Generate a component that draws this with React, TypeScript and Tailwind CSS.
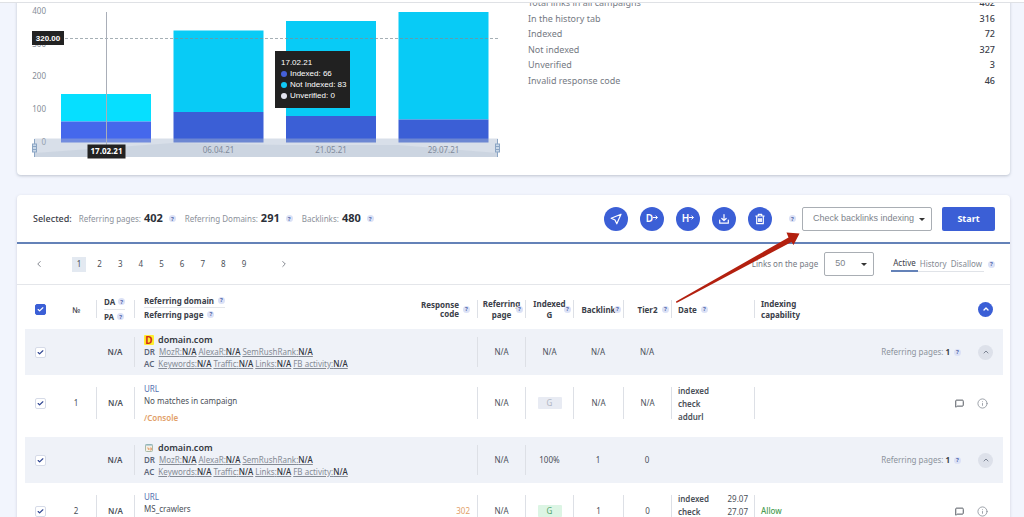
import { Check, ChevronLeft, ChevronRight, ChevronUp, Info, MessageSquare } from "lucide-react";
import type { ReactNode } from "react";

const stats: [string, number][] = [
  ["Total links in all campaigns", 402],
  ["In the history tab", 316],
  ["Indexed", 72],
  ["Not indexed", 327],
  ["Unverified", 3],
  ["Invalid response code", 46],
];

const bars = [
  { x: 61, top: 94, split: 121.5, hi: "#06dfff", lo: "#4568ec" },
  { x: 173.5, top: 30.5, split: 112, hi: "#08cbf6", lo: "#3b5fd6" },
  { x: 286, top: 21, split: 116, hi: "#08cbf6", lo: "#3b5fd6" },
  { x: 398.5, top: 12, split: 119.5, hi: "#08cbf6", lo: "#3b5fd6" },
];

function Hint() {
  return (
    <span className="inline-flex size-[7px] shrink-0 items-center justify-center rounded-full bg-[#dbe1f6] text-[6px] leading-none font-bold text-[#5468a8]">
      ?
    </span>
  );
}

function SliderHandle({ x }: { x: number }) {
  return (
    <g stroke="#8ba5c4" fill="#c9d8e8">
      <path d={`M${x} 139V157`} />
      <rect x={x - 2} y="144" width="4" height="8" />
      <path d={`M${x - 2} 146.5h4M${x - 2} 149.5h4`} />
    </g>
  );
}

function Chart() {
  return (
    <div className="relative w-[485px] shrink-0">
      <svg viewBox="17 -4 485 179" width="485" height="179" className="block">
        <g fill="#858d97" fontSize="8" textAnchor="end">
          <text x="46" y="14">400</text>
          <text x="46" y="47">300</text>
          <text x="46" y="79">200</text>
          <text x="46" y="112">100</text>
          <text x="46" y="145">0</text>
        </g>
        {bars.map((b) => (
          <g key={b.x}>
            <rect x={b.x} y={b.top} width="90" height={b.split - b.top} fill={b.hi} />
            <rect x={b.x} y={b.split} width="90" height={142.5 - b.split} fill={b.lo} />
          </g>
        ))}
        <path d="M35 38.5H500" stroke="#7f8d96" strokeOpacity=".7" strokeDasharray="3 2" />
        <path d="M106.5 12V145" stroke="#a9aeb8" />
        <rect x="34.5" y="138.5" width="463.5" height="18.5" fill="#a9b9cf" fillOpacity=".45" />
        <path d="M34.5 157V153L173 143L286 145L398 145L498 153V157Z" fill="#9fb0c2" fillOpacity=".2" />
        <SliderHandle x={34.5} />
        <SliderHandle x={497.5} />
        <g fill="#7f8a9b" fontSize="8" textAnchor="middle">
          <text x="218.500" y="153">06.04.21</text>
          <text x="331" y="153">21.05.21</text>
          <text x="443.500" y="153">29.07.21</text>
        </g>
        <rect x="32" y="31" width="32" height="14" fill="#222" />
        <rect x="87.500" y="144.500" width="38" height="14" fill="#222" />
        <g fill="#fff" fontWeight="700" fontSize="8" textAnchor="middle">
          <text x="48" y="41" className="font-['Liberation_Sans',sans-serif]">320.00</text>
          <text x="106.500" y="154">17.02.21</text>
        </g>
      </svg>
      <div className="absolute top-[55px] left-[258px] h-[57px] w-[75px] bg-[#212121] px-[6px] py-[6px] font-['Liberation_Sans',sans-serif] text-[8px] leading-[11px] text-white">
        <div>17.02.21</div>
        {[
          ["Indexed: 66", "bg-[#4560d8]"],
          ["Not Indexed: 83", "bg-[#10c8f5]"],
          ["Unverified: 0", "bg-[#e4e4ee]"],
        ].map(([label, color]) => (
          <div key={label} className="flex items-center gap-[3px] whitespace-nowrap">
            <span className={`size-[6px] shrink-0 rounded-full ${color}`} />
            {label}
          </div>
        ))}
      </div>
    </div>
  );
}

function Total({ label, value }: { label: string; value: number }) {
  return (
    <span className="mr-[9px] flex items-center text-[#8c919a]">
      {label}
      <b className="mr-[6px] ml-[3px] text-[11px] text-[#2b2f38]">{value}</b>
      <Hint />
    </span>
  );
}

function RoundButton({ label, children }: { label: string; children: ReactNode }) {
  return (
    <button aria-label={label} className="flex size-6 items-center justify-center rounded-full bg-[#3b5fd6] text-[10px] font-semibold text-white">
      {children}
    </button>
  );
}

function Glyph({ d }: { d: string }) {
  return (
    <svg viewBox="0 0 12 12" className="size-3" fill="none" stroke="currentColor" strokeWidth="1.2" strokeLinecap="round" strokeLinejoin="round">
      <path d={d} />
    </svg>
  );
}

function SmallArrow() {
  return (
    <svg viewBox="0 0 5 5" className="mb-[3px] size-[5px]" fill="none" stroke="currentColor">
      <path d="M0 2.500H4.300M2.500 .6L4.400 2.500L2.500 4.400" />
    </svg>
  );
}

function Dropdown({ label, value, className }: { label: string; value: string; className: string }) {
  return (
    <span className={`relative flex h-6 ${className}`}>
      <select aria-label={label} className="w-full appearance-none rounded-[2px] border border-[#a9aeb4] bg-white pl-[10px] font-['Liberation_Sans',sans-serif] text-[9px] text-[#7d838b]">
        <option>{value}</option>
      </select>
      <svg viewBox="0 0 6 3" className="pointer-events-none absolute top-[11px] right-[7px] h-[3px] w-[6px]">
        <path d="M0 0h6L3 3z" fill="#333" />
      </svg>
    </span>
  );
}

function Tick({ label, all }: { label: string; all?: boolean }) {
  return (
    <span className="relative mx-auto flex size-[11px]">
      <input
        type="checkbox"
        defaultChecked
        aria-label={label}
        className={`size-[11px] appearance-none rounded-[2px] border ${all ? "border-[#3b5fd6] bg-[#3b5fd6]" : "border-[#d6dbe8] bg-white"}`}
      />
      <Check strokeWidth={4} className={`pointer-events-none absolute top-[2px] left-[2px] size-[7px] ${all ? "text-white" : "text-[#2f4591]"}`} />
    </span>
  );
}

/* Cell whose separator is shorter than the row. */
function Cell({ children, height, className = "" }: { children?: ReactNode; height: string; className?: string }) {
  return <div className={`relative flex items-center border-l border-[#dde0e6] ${height} ${className}`}>{children}</div>;
}

function HeadCell({ children }: { children: ReactNode }) {
  return (
    <th className="p-0 pt-1">
      <Cell height="h-[18px]" className="justify-center text-center">
        <span>{children}</span>
        <span className="absolute right-[2px] flex">
          <Hint />
        </span>
      </Cell>
    </th>
  );
}

function Metric({ name }: { name: string }) {
  return (
    <a href="#" className="mr-[2px] text-[#858b95] underline">
      {name}:<span className="font-medium text-[#2f343c]">N/A</span>
    </a>
  );
}

function GroupRow({ icon, indexed, backlinks, tier2 }: { icon: ReactNode; indexed: string; backlinks: string; tier2: string }) {
  return (
    <tr className="h-[46px] bg-[#eff2f8]">
      <td className="p-0"><Tick label="Select domain" /></td>
      <td className="p-0" />
      <td className="p-0 text-center font-semibold">N/A</td>
      <td className="p-0" colSpan={2}>
        <Cell height="h-[30px]" className="pl-[9px]">
          <div className="leading-3 whitespace-nowrap">
            <div className="flex items-center gap-[4px] text-[9px] font-semibold text-[#343942]">
              {icon}
              domain.com
            </div>
            <div><b className="mr-[4px] font-semibold text-[#5d6678]">DR</b><Metric name="MozR" /><Metric name="AlexaR" /><Metric name="SemRushRank" /></div>
            <div><b className="mr-[4px] font-semibold text-[#5d6678]">AC</b><Metric name="Keywords" /><Metric name="Traffic" /><Metric name="Links" /><Metric name="FB activity" /></div>
          </div>
        </Cell>
      </td>
      <td className="p-0"><Cell height="h-[30px]" className="justify-center">N/A</Cell></td>
      <td className="p-0"><Cell height="h-[30px]" className="justify-center">{indexed}</Cell></td>
      <td className="p-0 text-center">{backlinks}</td>
      <td className="p-0 text-center">{tier2}</td>
      <td className="p-0" />
      <td className="p-0">
        <div className="flex items-center justify-end pr-[10px] text-[#8c929c]">
          Referring pages:<b className="mr-[4px] ml-[2px] text-[#3a3f48]">1</b>
          <Hint />
          <button aria-label="Collapse" className="ml-[17px] flex size-[15px] items-center justify-center rounded-full bg-[#dde1ea] text-[#7d8594]">
            <ChevronUp className="size-[8px]" strokeWidth={3} />
          </button>
        </div>
      </td>
    </tr>
  );
}

type Link = { n: number; text: string; path: string; code: string; good: boolean; count: string; tier2: string; dates: [string, string][]; capability: string };

function LinkRow({ n, text, path, code, good, count, tier2, dates, capability }: Link) {
  const h = "h-[32px]";
  return (
    <tr className="h-[62px]">
      <td className="p-0 pb-[6px]"><Tick label={`Select link ${n}`} /></td>
      <td className="p-0 pb-[6px] text-center">{n}</td>
      <td className="p-0 pb-[6px]"><Cell height={h} className="justify-center font-semibold">N/A</Cell></td>
      <td className="p-0 pb-[6px]">
        <Cell height={h} className="pl-[9px]">
          <div className="leading-3">
            <a href="#" className="block text-[#5270b0]">URL</a>
            <div>{text}</div>
            <div className="pt-[5px] font-semibold text-[#e2a069]">{path}</div>
          </div>
        </Cell>
      </td>
      <td className="p-0 pr-[7px] pb-[6px] text-right text-[#e2a069]">{code}</td>
      <td className="p-0 pb-[6px]"><Cell height={h} className="justify-center">N/A</Cell></td>
      <td className="p-0 pb-[6px]">
        <Cell height={h} className="justify-center">
          <span className={`flex h-3 w-6 items-center justify-center rounded-[1px] ${good ? "bg-[#dcf5e4] text-[#57a66c]" : "bg-[#e8ebf3] text-[#b0b6c2]"}`}>G</span>
        </Cell>
      </td>
      <td className="p-0 pb-[6px]"><Cell height={h} className="justify-center">{count}</Cell></td>
      <td className="p-0 pb-[6px]"><Cell height={h} className="justify-center">{tier2}</Cell></td>
      <td className="p-0 pb-[6px]">
        <Cell height={h} className="pr-[6px] pl-[6px]">
          <div className="w-full leading-[13px]">
            {dates.map(([name, date]) => (
              <div key={name} className="flex justify-between"><span className="font-semibold">{name}</span><span>{date}</span></div>
            ))}
          </div>
        </Cell>
      </td>
      <td className="p-0 pb-[6px]">
        <Cell height={h} className="pr-[15px] pl-[6px] font-medium text-[#4a9c50]">
          {capability}
          <button aria-label="Comment" className="ml-auto text-[#4a4f58]"><MessageSquare className="size-[9px]" strokeWidth={2.5} /></button>
          <button aria-label="Details" className="ml-[13px] text-[#8b9099]"><Info className="size-[11px]" strokeWidth={1.8} /></button>
        </Cell>
      </td>
    </tr>
  );
}

export default function App() {
  return (
    <div className="flex h-screen flex-col overflow-hidden bg-[#f2f5fd] font-['Noto_Sans',sans-serif] text-[8px] text-[#4a4f58]">
      <header className="h-[3px] shrink-0 border-b border-[#dfe1e5] bg-white" />
      <main className="flex-1 overflow-hidden pr-[14px] pl-[17px]">
        <section className="-mt-[7px] flex rounded-[4px] bg-white shadow-[0_1px_3px_rgba(90,100,120,0.35)]">
          <Chart />
          <dl className="ml-[26px] flex h-[92px] flex-1 flex-col justify-between pr-[15px] text-[9px] leading-[14px]">
            {stats.map(([name, value]) => (
              <div key={name} className="flex justify-between">
                <dt className="text-[#757a83]">{name}</dt>
                <dd className="font-medium text-[#3b4049]">{value}</dd>
              </div>
            ))}
          </dl>
        </section>

        <section className="relative mt-5 rounded-[4px] bg-white shadow-[0_1px_3px_rgba(90,100,120,0.25)]">
          <div className="flex h-[49px] items-center border-b-2 border-[#6482b8] pr-[15px] pl-4">
            <span className="mr-[7px] text-[9px] font-medium text-[#3b4049]">Selected:</span>
            <Total label="Referring pages:" value={402} />
            <Total label="Referring Domains:" value={291} />
            <Total label="Backlinks:" value={480} />
            <div className="ml-auto flex items-center gap-3">
              <RoundButton label="Send"><Glyph d="M11 1.200L1.200 5.200L5 7L6.800 10.800Z" /></RoundButton>
              <RoundButton label="Export domains">D<SmallArrow /></RoundButton>
              <RoundButton label="Export hosts">H<SmallArrow /></RoundButton>
              <RoundButton label="Download"><Glyph d="M6 1.500V7.500M3.800 5.500L6 7.700L8.200 5.500M1.700 7V10.200H10.300V7" /></RoundButton>
              <RoundButton label="Delete"><Glyph d="M1.800 3H10.200M4.300 3V1.300H7.700V3M2.700 3.200V10.700H9.300V3.200M4.700 5.500V8.500M6 5.500V8.500M7.300 5.500V8.500" /></RoundButton>
            </div>
            <span className="mr-[6px] ml-[17px] flex"><Hint /></span>
            <Dropdown label="Action" value="Check backlinks indexing" className="w-[130px]" />
            <button className="ml-[10px] h-6 w-[53px] rounded-[2px] bg-[#3b5fd6] text-[9px] font-bold text-white">Start</button>
          </div>

          <div className="flex h-[41px] items-center border-b border-[#e4e6ea] pr-[15px] pl-4">
            <button aria-label="Previous page" className="w-3 text-[#6b7079]"><ChevronLeft className="mx-auto size-[10px]" /></button>
            <nav className="mx-[27px] flex w-[179px] justify-between">
              {[1, 2, 3, 4, 5, 6, 7, 8, 9].map((p) => (
                <button key={p} className={`h-[15px] w-[14px] ${p === 1 ? "bg-[#e3e9f1]" : ""}`}>{p}</button>
              ))}
            </nav>
            <button aria-label="Next page" className="w-3 text-[#6b7079]"><ChevronRight className="mx-auto size-[10px]" /></button>
            <span className="mr-[6px] ml-auto text-[#757a83]">Links on the page</span>
            <Dropdown label="Links on the page" value="50" className="w-[50px]" />
            <div className="mr-[4px] ml-[17px] flex text-[#858a93]">
              <button className="h-4 border-b-2 border-[#6482b8] px-[2px] text-[#3b4049]">Active</button>
              <button className="h-4 border-b border-[#e0e3e8] px-[2px]">History</button>
              <button className="h-4 border-b border-[#e0e3e8] px-[2px]">Disallow</button>
            </div>
            <Hint />
          </div>

          <div className="pr-[7px] pl-2">
            <table className="w-full table-fixed border-collapse">
              <colgroup>
                <col className="w-[31px]" />
                <col className="w-[40px]" />
                <col className="w-[38px]" />
                <col />
                <col className="w-[77px]" />
                <col className="w-[48px]" />
                <col className="w-[48px]" />
                <col className="w-[50px]" />
                <col className="w-[48px]" />
                <col className="w-[83px]" />
                <col className="w-[249px]" />
              </colgroup>
              <thead className="text-left leading-[11px] text-[#3b4049]">
                <tr className="h-[44px]">
                  <th className="p-0 pt-1"><Tick label="Select all" all /></th>
                  <th className="p-0 pt-1 text-center font-medium">№</th>
                  <th className="p-0 pt-1">
                    <Cell height="h-[18px]" className="pl-[7px]">
                      <div className="leading-[14px]">
                        <div className="flex items-center gap-[3px] border-b border-[#e4e6ea]">DA <Hint /></div>
                        <div className="flex items-center gap-[3px]">PA <Hint /></div>
                      </div>
                    </Cell>
                  </th>
                  <th className="p-0 pt-1">
                    <Cell height="h-[18px]" className="pl-[9px]">
                      <div className="pb-1 leading-[13px]">
                        <div className="flex items-center gap-[4px] border-b border-[#e4e6ea]">Referring domain <Hint /></div>
                        <div className="flex items-center gap-[4px]">Referring page <Hint /></div>
                      </div>
                    </Cell>
                  </th>
                  <th className="p-0 pt-1">
                    <div className="flex items-center justify-end gap-[4px] pr-[7px] text-right leading-[9px]">
                      <span>Response<br />code</span>
                      <Hint />
                    </div>
                  </th>
                  <HeadCell>Referring<br />page</HeadCell>
                  <HeadCell>Indexed<br />G</HeadCell>
                  <HeadCell>Backlink</HeadCell>
                  <HeadCell>Tier2</HeadCell>
                  <th className="p-0 pt-1"><Cell height="h-[18px]" className="gap-[4px] pl-[6px]">Date <Hint /></Cell></th>
                  <th className="p-0 pt-1">
                    <Cell height="h-[18px]" className="justify-between pr-[10px] pl-[6px]">
                      <span>Indexing<br />capability</span>
                      <button aria-label="Collapse all" className="flex size-[15px] items-center justify-center rounded-full bg-[#3b5fd6] text-white">
                        <ChevronUp className="size-[8px]" strokeWidth={4} />
                      </button>
                    </Cell>
                  </th>
                </tr>
              </thead>
              <tbody>
                <GroupRow
                  icon={<span className="flex size-[10px] items-center justify-center rounded-[1px] bg-[#ffee2e] text-[10px] font-bold text-[#cf2a1b]">D</span>}
                  indexed="N/A"
                  backlinks="N/A"
                  tier2="N/A"
                />
                <LinkRow n={1} text="No matches in campaign" path="/Console" code="" good={false} count="N/A" tier2="N/A" dates={[["indexed", ""], ["check", ""], ["addurl", ""]]} capability="" />
                <GroupRow
                  icon={
                    <svg viewBox="0 0 10 10" className="size-[10px]" fill="none">
                      <rect x="1.500" y="1.500" width="7" height="7" rx="1" fill="#f6f1e6" stroke="#a9b9a6" />
                      <path d="M1.500 2h7" stroke="#7fb3c9" />
                      <path d="M3 5h1.500v2M6 5v2h1.500V5z" stroke="#e39a66" strokeWidth=".8" />
                    </svg>
                  }
                  indexed="100%"
                  backlinks="1"
                  tier2="0"
                />
                <LinkRow n={2} text="MS_crawlers" path="/Console" code="302" good count="1" tier2="0" dates={[["indexed", "29.07"], ["check", "27.07"], ["addurl", "27.07"]]} capability="Allow" />
              </tbody>
            </table>
          </div>

          <svg viewBox="0 0 130 74" className="pointer-events-none absolute top-[36px] right-[206px] h-[74px] w-[130px]">
            <path d="M2 70.500L114.500 6.500L112.500 1.500L125.500 2.500L119.500 14L117.500 11L2.500 72Z" fill="#b3200f" />
          </svg>
        </section>
      </main>
    </div>
  );
}
